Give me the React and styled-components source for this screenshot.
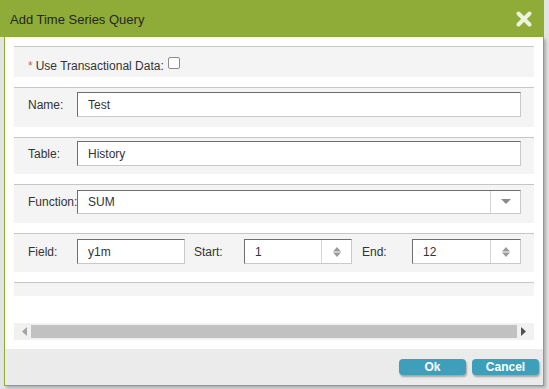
import React from "react";
import styled, { createGlobalStyle } from "styled-components";

const Global = createGlobalStyle`
  html, body { margin: 0; padding: 0; }
  body {
    background: #e4e4e4;
    font-family: "Liberation Sans", Arial, sans-serif;
    font-size: 12px;
    color: #333;
    width: 549px;
    height: 389px;
    overflow: hidden;
  }
`;

const Dialog = styled.div`
  width: 544px;
  display: flex;
  flex-direction: column;
`;

const Header = styled.div`
  height: 37px;
  background: #8eac37;
  display: flex;
  align-items: center;
  justify-content: space-between;
  padding: 0 12px 0 10px;
  box-sizing: border-box;
`;

const Title = styled.div`
  font-size: 13px;
  color: #262626;
  padding-top: 1px;
`;

const Close = styled.button`
  border: 0;
  background: none;
  padding: 0;
  width: 16px;
  height: 16px;
  display: flex;
  cursor: pointer;
`;

const Frame = styled.div`
  margin-left: 4px;
  border-left: 1px solid #8eac37;
  border-right: 1px solid #8eac37;
  border-bottom: 1px solid #8eac37;
  background: #fff;
  box-shadow: 2px 2px 3px rgba(0, 0, 0, 0.25);
  display: flex;
  flex-direction: column;
`;

const Body = styled.div`
  padding: 9px 9px 9px 9px;
  display: flex;
  flex-direction: column;
  gap: 10px;
`;

const Section = styled.div`
  border-top: 1px solid #c6c6c6;
  background: #f4f4f4;
  height: ${(p) => p.$h}px;
  box-sizing: border-box;
  display: flex;
  align-items: flex-start;
  padding: ${(p) => p.$pt || 0}px 13px 0 14px;
`;

const Label = styled.label`
  width: ${(p) => p.$w || 49}px;
  flex: none;
  color: #333;
  line-height: 14px;
  padding-top: ${(p) => p.$pt ?? 6}px;
  white-space: nowrap;
`;

const Req = styled.span`
  color: #e05a5a;
  margin-right: 3px;
`;

const Check = styled.span`
  display: inline-block;
  width: 10px;
  height: 10px;
  border: 1px solid #8a8a8a;
  border-radius: 2px;
  background: #fff;
  margin-left: 4px;
  vertical-align: 1px;
`;

const Input = styled.div`
  width: ${(p) => p.$w}px;
  height: ${(p) => p.$h || 25}px;
  box-sizing: border-box;
  background: #fff;
  border: 1px solid #c9c9c9;
  border-top-color: #6e6e6e;
  border-left-color: #6e6e6e;
  display: flex;
  align-items: stretch;
  flex: none;
`;

const Value = styled.div`
  flex: 1;
  padding-left: 10px;
  display: flex;
  align-items: center;
  color: #333;
  font-size: 12px;
`;

const SideButton = styled.div`
  width: 29px;
  border-left: 1px solid #d6d6d6;
  display: flex;
  align-items: center;
  justify-content: center;
`;

const Gap = styled.div`
  width: ${(p) => p.$w}px;
  flex: none;
`;

const Spacer = styled.div`
  height: 7px;
`;

const Scroll = styled.div`
  height: 17px;
  background: #f1f1f1;
  display: flex;
  align-items: center;
  padding: 0 4px;
`;

const Arrow = styled.div`
  width: 13px;
  display: flex;
  justify-content: center;
`;

const Thumb = styled.div`
  flex: 1;
  height: 13px;
  background: #c1c1c1;
`;

const Footer = styled.div`
  height: 36px;
  background: #ebebeb;
  display: flex;
  justify-content: flex-end;
  align-items: flex-start;
  padding: 10px 4px 0 0;
  box-sizing: border-box;
  gap: 6px;
`;

const Button = styled.button`
  width: 67px;
  height: 16px;
  border: 0;
  border-radius: 4px;
  background: #3e9fbb;
  color: #fff;
  font-family: "Liberation Sans", Arial, sans-serif;
  font-weight: bold;
  font-size: 12px;
  padding: 0;
  line-height: 16px;
  box-shadow: 1px 2px 2px rgba(0, 0, 0, 0.3);
  cursor: pointer;
`;

const Caret = () => (
  <svg width="10" height="6" viewBox="0 0 10 6">
    <path d="M0 0h10L5 5z" fill="#8a8a8a" />
  </svg>
);

const Spin = () => (
  <svg width="8" height="10" viewBox="0 0 8 10">
    <path d="M4 0L8 4.5H0z M0 5.5h8L4 10z" fill="#9a9a9a" />
  </svg>
);

export default function App() {
  return (
    <>
      <Global />
      <Dialog>
        <Header>
          <Title>Add Time Series Query</Title>
          <Close aria-label="close">
            <svg width="16" height="16" viewBox="0 0 16 16">
              <path
                d="M2.5 2.5L13.5 13.5M13.5 2.5L2.5 13.5"
                stroke="#eef3de"
                strokeWidth="4"
                strokeLinecap="round"
              />
            </svg>
          </Close>
        </Header>
        <Frame>
          <Body>
            <Section $h={31} $pt={5}>
              <Label $w={200} $pt={5}>
                <Req>*</Req>Use Transactional Data:
                <Check />
              </Label>
            </Section>
            <Section $h={40} $pt={4}>
              <Label>Name:</Label>
              <Input $w={444}>
                <Value>Test</Value>
              </Input>
            </Section>
            <Section $h={37} $pt={3}>
              <Label>Table:</Label>
              <Input $w={444}>
                <Value>History</Value>
              </Input>
            </Section>
            <Section $h={39} $pt={5}>
              <Label $pt={5}>Function:</Label>
              <Input $w={444} $h={24}>
                <Value>SUM</Value>
                <SideButton>
                  <Caret />
                </SideButton>
              </Input>
            </Section>
            <Section $h={39} $pt={5}>
              <Label>Field:</Label>
              <Input $w={108}>
                <Value>y1m</Value>
              </Input>
              <Gap $w={9} />
              <Label $w={50}>Start:</Label>
              <Input $w={108}>
                <Value>1</Value>
                <SideButton>
                  <Spin />
                </SideButton>
              </Input>
              <Gap $w={10} />
              <Label $w={50}>End:</Label>
              <Input $w={109}>
                <Value>12</Value>
                <SideButton>
                  <Spin />
                </SideButton>
              </Input>
            </Section>
            <Section $h={14} />
            <Spacer />
            <Scroll>
              <Arrow>
                <svg width="5" height="9" viewBox="0 0 5 9">
                  <path d="M5 0v9L0 4.5z" fill="#a3a3a3" />
                </svg>
              </Arrow>
              <Thumb />
              <Arrow>
                <svg width="5" height="9" viewBox="0 0 5 9">
                  <path d="M0 0v9L5 4.5z" fill="#505050" />
                </svg>
              </Arrow>
            </Scroll>
          </Body>
          <Footer>
            <Button>Ok</Button>
            <Button>Cancel</Button>
          </Footer>
        </Frame>
      </Dialog>
    </>
  );
}
